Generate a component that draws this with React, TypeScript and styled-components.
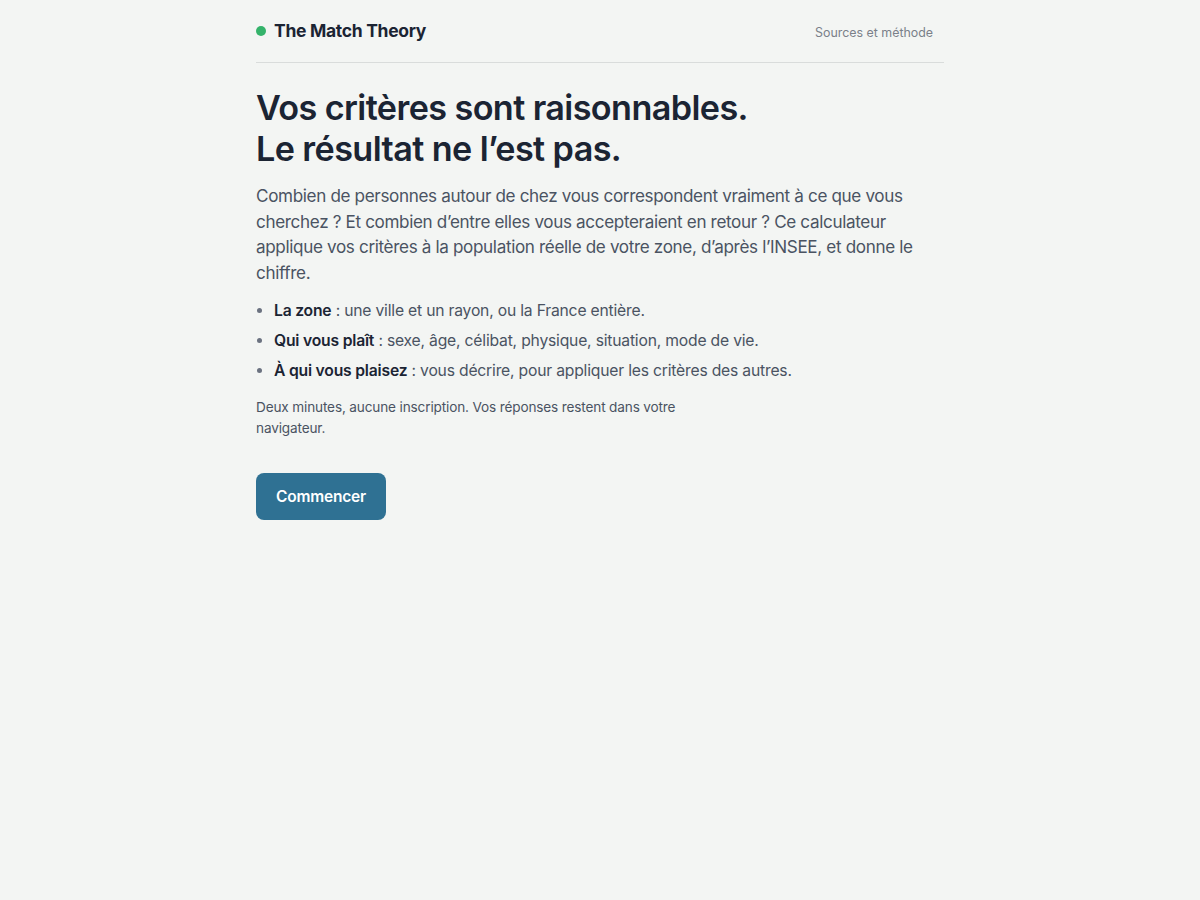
import React from "react";
import styled, { createGlobalStyle } from "styled-components";

const Global = createGlobalStyle`
  html, body { margin: 0; padding: 0; background: #f3f5f3; }
  body { font-family: Inter, "Noto Sans", sans-serif; color: #1b2433; -webkit-font-smoothing: antialiased; }
  * { box-sizing: border-box; }
`;

const Page = styled.div`
  max-width: 688px;
  margin: 0 auto;
  min-height: 900px;
`;

const Header = styled.header`
  display: flex;
  align-items: center;
  justify-content: space-between;
  height: 63px;
  padding-bottom: 1px;
  border-bottom: 1px solid #d9dcdb;
`;

const Brand = styled.a`
  display: flex;
  align-items: center;
  gap: 8px;
  font-size: 17.5px;
  font-weight: 700;
  color: #1b2433;
  text-decoration: none;
  letter-spacing: -0.3px;
`;

const Dot = styled.span`
  width: 10px;
  height: 10px;
  border-radius: 50%;
  background: #34b36a;
`;

const NavLink = styled.a`
  font-size: 12.4px;
  color: #7a8089;
  text-decoration: none;
  padding-right: 11px;
  padding-top: 4px;
`;

const Main = styled.main`
  padding-top: 25px;
`;

const Title = styled.h1`
  margin: 0;
  font-size: 34.2px;
  line-height: 40.5px;
  font-weight: 600;
  letter-spacing: -0.6px;
  color: #1b2433;
`;

const Lead = styled.p`
  margin: 14px 0 0;
  font-size: 17.1px;
  line-height: 25.5px;
  color: #4a5362;
  letter-spacing: -0.35px;
`;

const List = styled.ul`
  margin: 11px 0 0;
  padding-left: 18px;
  list-style: disc;
  color: #4a5362;
`;

const Item = styled.li`
  font-size: 15.7px;
  line-height: 30px;
  letter-spacing: -0.2px;
  &::marker { color: #6b7280; }
  strong { color: #1b2433; font-weight: 600; }
`;

const Note = styled.p`
  margin: 11px 0 0;
  max-width: 430px;
  font-size: 13.6px;
  line-height: 21px;
  color: #4a5362;
  letter-spacing: -0.15px;
`;

const Button = styled.button`
  margin-top: 34px;
  height: 47px;
  padding: 0 20px;
  border: none;
  border-radius: 8px;
  background: #2f7193;
  color: #ffffff;
  font-family: inherit;
  font-size: 15.5px;
  font-weight: 600;
  letter-spacing: -0.2px;
  cursor: pointer;
`;

export default function App() {
  return (
    <>
      <Global />
      <Page>
        <Header>
          <Brand href="#">
            <Dot />
            The Match Theory
          </Brand>
          <NavLink href="#">Sources et méthode</NavLink>
        </Header>
        <Main>
          <Title>
            Vos critères sont raisonnables.
            <br />
            Le résultat ne l’est pas.
          </Title>
          <Lead>
            Combien de personnes autour de chez vous correspondent vraiment à ce que vous
            cherchez ? Et combien d’entre elles vous accepteraient en retour ? Ce calculateur
            applique vos critères à la population réelle de votre zone, d’après l’INSEE, et
            donne le chiffre.
          </Lead>
          <List>
            <Item>
              <strong>La zone</strong> : une ville et un rayon, ou la France entière.
            </Item>
            <Item>
              <strong>Qui vous plaît</strong> : sexe, âge, célibat, physique, situation, mode de vie.
            </Item>
            <Item>
              <strong>À qui vous plaisez</strong> : vous décrire, pour appliquer les critères des autres.
            </Item>
          </List>
          <Note>
            Deux minutes, aucune inscription. Vos réponses restent dans votre navigateur.
          </Note>
          <Button>Commencer</Button>
        </Main>
      </Page>
    </>
  );
}
